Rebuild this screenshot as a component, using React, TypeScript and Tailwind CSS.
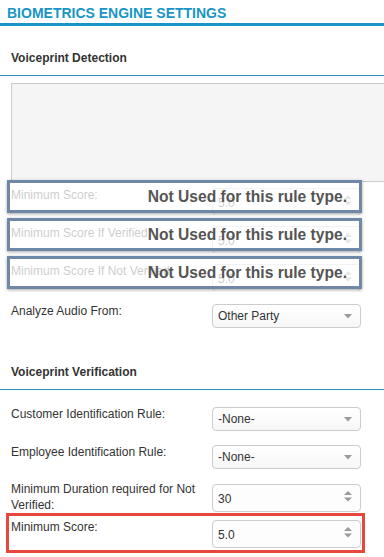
import React from "react";

const Caret = () => (
  <svg width="8" height="5" viewBox="0 0 8 5" className="shrink-0">
    <polygon points="0,0 8,0 4,4.5" fill="#9a9a9a" />
  </svg>
);

const Spinner = () => (
  <svg width="8" height="11" viewBox="0 0 8 11" className="shrink-0">
    <polygon points="0,4 4,0 8,4" fill="#9a9a9a" />
    <polygon points="0,6.5 8,6.5 4,10.5" fill="#9a9a9a" />
  </svg>
);

const Select = ({ value }: { value: string }) => (
  <div className="w-[149px] h-[24px] shrink-0 rounded-[4px] border border-[#cccccc] bg-gradient-to-b from-white to-[#f7f7f7] flex items-center justify-between pl-[5px] pr-[8px] text-[12px] text-[#333]">
    <span>{value}</span>
    <Caret />
  </div>
);

const NumberInput = ({ value }: { value: string }) => (
  <div className="w-[149px] h-[28px] shrink-0 rounded-[4px] border border-[#cccccc] bg-[#fdfdfd] flex items-start justify-between pl-[5px] pr-[8px] pt-[5px] text-[12px] leading-[16px] text-[#333]">
    <span className="pt-[1px]">{value}</span>
    <span className="pt-[1px]">
      <Spinner />
    </span>
  </div>
);

const Overlay = () => (
  <div className="absolute left-[7px] top-[-8px] w-[355px] h-[33px] border-[3px] border-[#6f88a8] bg-white/75 shadow-[0_1px_3px_rgba(0,0,0,0.35)] flex items-center justify-end pr-[12px]">
    <span className="text-[15.6px] leading-[18px] font-bold text-[#555]">Not Used for this rule type.</span>
  </div>
);

const Label = ({ children, extra = "" }: { children: React.ReactNode; extra?: string }) => (
  <div className={`w-[201px] shrink-0 text-[12px] leading-[16px] text-[#333] -mt-[1px] ${extra}`}>{children}</div>
);

export default function App() {
  return (
    <div className="w-[384px] h-[557px] overflow-hidden bg-white font-['Liberation_Sans',Arial,sans-serif] text-[#333]">
      <div className="h-[26px] border-b-[3px] border-[#1895c6] pl-[7px] pt-[4px] text-[14px] leading-[19px] font-bold text-[#1895c6]">
        BIOMETRICS ENGINE SETTINGS
      </div>

      <div className="pt-[24px] pb-[8px] pl-[11px] text-[12px] leading-[17px] font-bold text-[#333] border-b border-[#2b8fb4]">
        Voiceprint Detection
      </div>

      <div className="mt-[7px] ml-[11px] -mr-[6px] h-[99px] border border-[#cccccc] bg-[#f5f5f5]" />

      <div className="relative flex items-start pl-[11px] mt-[6px]">
        <Label>Minimum Score:</Label>
        <div className="h-[27px] overflow-hidden rounded-[4px]">
          <NumberInput value="5.0" />
        </div>
        <Overlay />
      </div>

      <div className="relative flex items-start pl-[11px] mt-[11px]">
        <Label>Minimum Score If Verified:</Label>
        <div className="h-[27px] overflow-hidden rounded-[4px]">
          <NumberInput value="5.0" />
        </div>
        <Overlay />
      </div>

      <div className="relative flex items-start pl-[11px] mt-[11px]">
        <Label>Minimum Score If Not Verified:</Label>
        <div className="h-[27px] overflow-hidden rounded-[4px]">
          <NumberInput value="5.0" />
        </div>
        <Overlay />
      </div>

      <div className="flex items-start pl-[11px] mt-[13px]">
        <Label>Analyze Audio From:</Label>
        <Select value="Other Party" />
      </div>

      <div className="pt-[36px] pb-[8px] pl-[11px] text-[12px] leading-[17px] font-bold text-[#333] border-b border-[#2b8fb4]">
        Voiceprint Verification
      </div>

      <div className="flex items-start pl-[11px] mt-[17px]">
        <Label>Customer Identification Rule:</Label>
        <Select value="-None-" />
      </div>

      <div className="flex items-start pl-[11px] mt-[14px]">
        <Label>Employee Identification Rule:</Label>
        <Select value="-None-" />
      </div>

      <div className="flex items-start pl-[11px] mt-[15px] h-[29px]">
        <div className="w-[201px] shrink-0 text-[12px] leading-[16px] text-[#333] -mt-[3px] pr-[4px]">
          Minimum Duration required for Not Verified:
        </div>
        <NumberInput value="30" />
      </div>

      <div className="ml-[6px] w-[359px] border-[3px] border-[#e8473e] pt-[4px] pb-[2px] pl-[2px]">
        <div className="flex items-start">
          <Label>Minimum Score:</Label>
          <NumberInput value="5.0" />
        </div>
      </div>
    </div>
  );
}
